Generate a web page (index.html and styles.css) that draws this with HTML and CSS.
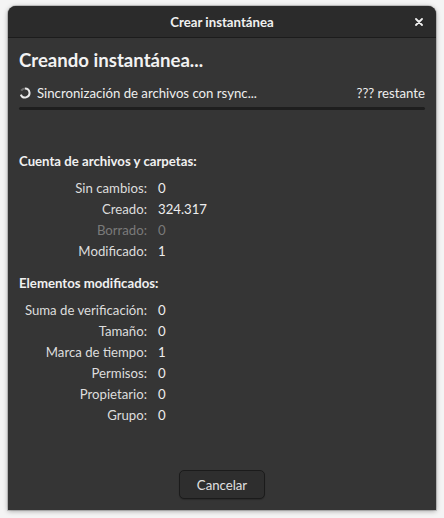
FILE: index.html
```html
<!DOCTYPE html>
<html lang="es">
<head>
<meta charset="utf-8">
<title>Crear instantánea</title>
<link rel="stylesheet" href="styles.css">
</head>
<body>
<div class="window">
  <header class="titlebar">
    <span class="title">Crear instantánea</span>
    <span class="close" aria-label="Cerrar">
      <svg width="8" height="8" viewBox="0 0 8 8"><path d="M1 1 L7 7 M7 1 L1 7" stroke="#f0f0f0" stroke-width="1.8" stroke-linecap="round"/></svg>
    </span>
  </header>
  <main class="content">
    <h1 class="heading">Creando instantánea...</h1>
    <div class="status">
      <svg class="spinner" width="12" height="12" viewBox="0 0 12 12">
        <path d="M2.2 3.6 A4.5 4.5 0 0 1 6 1.5" fill="none" stroke="#6a6a6a" stroke-width="2"/>
        <path d="M6 1.5 A4.5 4.5 0 1 1 1.8 7.6" fill="none" stroke="#e8e8e8" stroke-width="2"/>
      </svg>
      <span class="status-text">Sincronización de archivos con rsync...</span>
      <span class="remaining">??? restante</span>
    </div>
    <div class="progress"></div>

    <h2 class="section">Cuenta de archivos y carpetas:</h2>
    <div class="grid">
      <span class="label">Sin cambios:</span><span class="value">0</span>
      <span class="label">Creado:</span><span class="value">324.317</span>
      <span class="label dim">Borrado:</span><span class="value dim">0</span>
      <span class="label">Modificado:</span><span class="value">1</span>
    </div>

    <h2 class="section second">Elementos modificados:</h2>
    <div class="grid">
      <span class="label">Suma de verificación:</span><span class="value">0</span>
      <span class="label">Tamaño:</span><span class="value">0</span>
      <span class="label">Marca de tiempo:</span><span class="value">1</span>
      <span class="label">Permisos:</span><span class="value">0</span>
      <span class="label">Propietario:</span><span class="value">0</span>
      <span class="label">Grupo:</span><span class="value">0</span>
    </div>

    <div class="actions">
      <button class="btn">Cancelar</button>
    </div>
  </main>
</div>
</body>
</html>
```

FILE: styles.css
```css
html, body {
  margin: 0;
  padding: 0;
}
body {
  width: 444px;
  height: 518px;
  background: #f4f4f4;
  font-family: Lato, "Noto Sans", sans-serif;
  font-size: 13.2px;
  color: #eeeeee;
  overflow: hidden;
  padding-top: 6px;
  box-sizing: border-box;
}
.window {
  margin: 0 8px;
  height: 504px;
  background: #353535;
  border-radius: 8px 8px 0 0;
  box-shadow: 0 1px 5px rgba(0,0,0,0.35), 0 0 0 1px rgba(0,0,0,0.15);
  display: flex;
  flex-direction: column;
  overflow: hidden;
}
.titlebar {
  height: 31px;
  flex: none;
  background: #2b2b2b;
  border-bottom: 1px solid #1c1c1c;
  display: flex;
  align-items: center;
  justify-content: center;
  position: relative;
}
.title {
  font-weight: bold;
  font-size: 13.2px;
  color: #f0f0f0;
}
.close {
  position: absolute;
  right: 13px;
  top: 12px;
  width: 8px;
  height: 8px;
  display: flex;
}
.content {
  flex: 1;
  display: flex;
  flex-direction: column;
  padding: 0 11px 11px;
}
.heading {
  margin: 10px 0 0;
  font-size: 18.6px;
  font-weight: bold;
  color: #f2f2f2;
  line-height: 24px;
}
.status {
  display: flex;
  align-items: center;
  margin-top: 11px;
  height: 20px;
}
.spinner {
  flex: none;
  margin: 0 6px 0 0;
}
.status-text {
  flex: 1;
}
.remaining {
  flex: none;
}
.progress {
  margin-top: 4px;
  height: 3px;
  border-radius: 2px;
  background: #1e1e1e;
}
.section {
  margin: 42px 0 0;
  font-size: 13.2px;
  font-weight: bold;
  line-height: 18px;
  color: #f0f0f0;
}
.section.second {
  margin-top: 14px;
}
.grid {
  display: grid;
  grid-template-columns: 128px auto;
  column-gap: 11px;
  row-gap: 3px;
  margin-top: 9px;
  line-height: 18px;
}
.label {
  text-align: right;
  white-space: nowrap;
  color: #dddddd;
}
.value {
  color: #eeeeee;
}
.dim {
  color: #7a7a7a;
}
.actions {
  margin-top: auto;
  display: flex;
  justify-content: center;
}
.btn {
  width: 86px;
  height: 29px;
  background: #2e2e2e;
  border: 1px solid #1b1b1b;
  border-radius: 5px;
  color: #e0e0e0;
  font-family: inherit;
  font-size: 13.2px;
  padding: 0;
  box-shadow: 0 1px 1px rgba(0,0,0,0.2);
}
```
